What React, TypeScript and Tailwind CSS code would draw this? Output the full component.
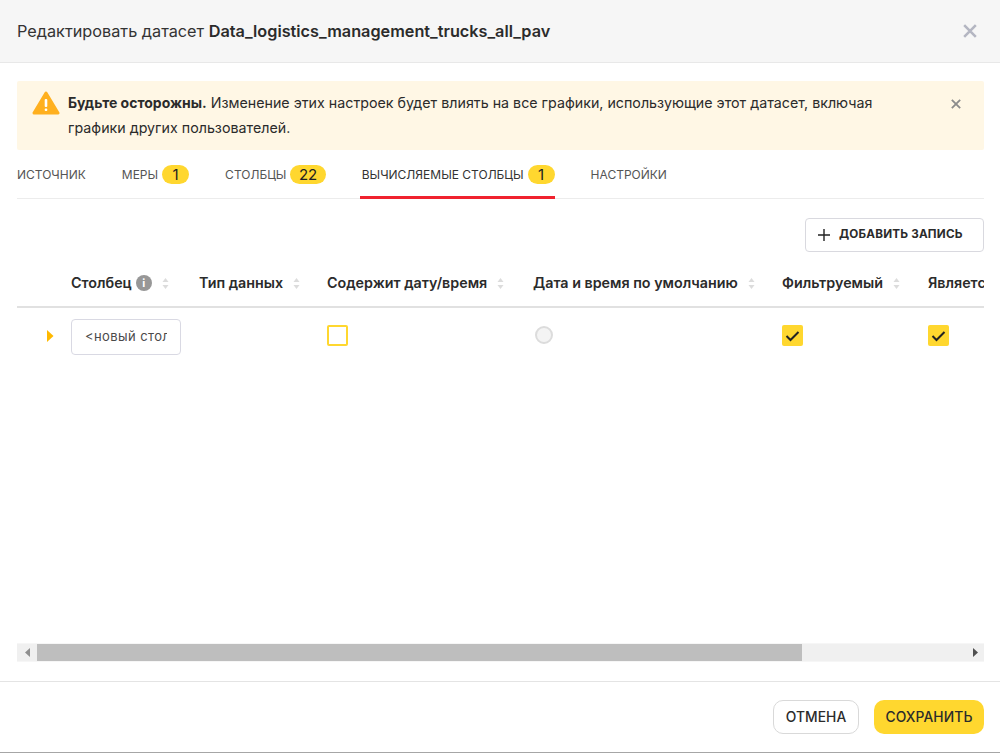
import React from "react";

const font = "font-['Inter','Noto_Sans',sans-serif]";

function Badge({ children }: { children: React.ReactNode }) {
  return (
    <span className="ml-[4px] inline-flex h-[19px] min-w-[27px] items-center justify-center rounded-full bg-[#ffd72f] px-[8.5px] text-[15px] leading-none text-[#222]">
      {children}
    </span>
  );
}

function Tab({ label, badge, active }: { label: string; badge?: string; active?: boolean }) {
  return (
    <div className={`relative flex h-full items-center pt-[1px] text-[12px] ${active ? "text-[#333]" : "text-[#555]"}`}>
      <span>{label}</span>
      {badge && <Badge>{badge}</Badge>}
      {active && <div className="absolute -bottom-px -left-[2px] right-0 h-[3px] bg-[#f0222e]" />}
    </div>
  );
}

function Sort() {
  return (
    <svg width="7" height="11" viewBox="0 0 7 11" className="shrink-0" fill="#dcdcdc">
      <path d="M3.5 0 L6.5 4 H0.5 Z" />
      <path d="M3.5 11 L6.5 7 H0.5 Z" />
    </svg>
  );
}

function Header({ children, info, noSort }: { children: React.ReactNode; info?: boolean; noSort?: boolean }) {
  return (
    <div className="flex items-center whitespace-nowrap text-[14.3px] font-semibold text-[#2b2b2b]">
      <span>{children}</span>
      {info && (
        <span className="ml-[4px] flex h-[16px] w-[16px] items-center justify-center rounded-full bg-[#979797] text-[11px] font-bold leading-none text-white">
          i
        </span>
      )}
      {!noSort && (
        <span className="ml-[10px]">
          <Sort />
        </span>
      )}
    </div>
  );
}

function Checked() {
  return (
    <div className="flex h-[21px] w-[21px] items-center justify-center rounded-[2px] bg-[#ffd72f]">
      <svg width="15" height="12" viewBox="0 0 15 12" fill="none" stroke="#222" strokeWidth="2">
        <path d="M1.5 6 L5.5 10 L13.5 2" />
      </svg>
    </div>
  );
}

function Close({ size, color }: { size: number; color: string }) {
  return (
    <svg width={size} height={size} viewBox="0 0 12 12" fill="none" stroke={color} strokeWidth="2.2">
      <path d="M1 1 L11 11 M11 1 L1 11" />
    </svg>
  );
}

export default function App() {
  return (
    <div className={`flex h-[753px] w-[1000px] flex-col overflow-hidden border-b border-[#a6a6a6] bg-white ${font}`}>
      <div className="flex h-[63px] shrink-0 items-center justify-between border-b border-[#e8e8e8] bg-[#f6f6f6] pl-[17px] pr-[23px]">
        <div className="text-[16.25px] text-[#333]">
          Редактировать датасет <span className="font-semibold text-[#2b2b2b]">Data_logistics_management_trucks_all_pav</span>
        </div>
        <Close size={14} color="#b4b6c2" />
      </div>

      <div className="flex flex-1 flex-col pl-[17px] pr-[16px]">
        <div className="mt-[18px] flex h-[69px] items-start justify-between rounded-[2px] bg-[#fff7e5] pl-[15px] pr-[23px] pt-[9px]">
          <div className="flex items-start">
            <svg width="28" height="25" viewBox="0 0 28 25" className="mr-[8px] mt-[1px] shrink-0">
              <path d="M14 2 L26 22 H2 Z" fill="#ffb01f" stroke="#ffb01f" strokeWidth="3" strokeLinejoin="round" />
              <rect x="12.7" y="8" width="2.6" height="8" rx="1" fill="#fff" />
              <rect x="12.7" y="17.5" width="2.6" height="2.6" rx="1" fill="#fff" />
            </svg>
            <div className="w-[830px] text-[14.25px] leading-[25px] text-[#2b2b2b]">
              <span className="text-[14px] font-bold">Будьте осторожны.</span> Изменение этих настроек будет влиять на все графики, использующие этот датасет, включая графики других пользователей.
            </div>
          </div>
          <div className="mt-[9px]">
            <Close size={10} color="#8c8c8c" />
          </div>
        </div>

        <div className="flex h-[49px] items-stretch gap-[36px] border-b border-[#ececec]">
          <Tab label="ИСТОЧНИК" />
          <Tab label="МЕРЫ" badge="1" />
          <Tab label="СТОЛБЦЫ" badge="22" />
          <Tab label="ВЫЧИСЛЯЕМЫЕ СТОЛБЦЫ" badge="1" active />
          <Tab label="НАСТРОЙКИ" />
        </div>

        <div className="mt-[19px] flex justify-end">
          <div className="flex h-[34px] w-[179px] items-center rounded-[4px] border border-[#d9d9df] bg-white pl-[12px] text-[11.7px] font-bold tracking-[0.2px] text-[#2b2b2b]">
            <svg width="12" height="12" viewBox="0 0 12 12" stroke="#222" strokeWidth="1.4" className="mr-[9px]">
              <path d="M6 0 V12 M0 6 H12" />
            </svg>
            ДОБАВИТЬ ЗАПИСЬ
          </div>
        </div>

        <div className="mt-[6px] w-[967px] overflow-hidden">
          <div className="grid h-[50px] w-[1100px] grid-cols-[54px_128px_128px_206px_249px_146px_189px] items-center border-b-2 border-[#e1e1e1] pt-[2px]">
            <div />
            <Header info>Столбец</Header>
            <Header>Тип данных</Header>
            <Header>Содержит дату/время</Header>
            <Header>Дата и время по умолчанию</Header>
            <Header>Фильтруемый</Header>
            <Header noSort>Является временным</Header>
          </div>
          <div className="grid w-[1100px] grid-cols-[54px_128px_128px_206px_249px_146px_189px] items-center pt-[11px]">
            <div className="pb-[3px] pl-[29px]">
              <svg width="8" height="12" viewBox="0 0 8 12" fill="#ffb900" className="block">
                <path d="M1 0 L7.5 6 L1 12 Z" />
              </svg>
            </div>
            <div>
              <div className="flex h-[36px] w-[110px] items-center overflow-hidden rounded-[4px] border border-[#d9d9e3] pl-[13px] pr-[13px] text-[13px] tracking-[0.4px] text-[#4a4a4a]">
                <span className="overflow-hidden whitespace-nowrap">&lt;новый столбец&gt;</span>
              </div>
            </div>
            <div />
            <div className="pb-[3px]">
              <div className="h-[21px] w-[21px] rounded-[2px] border-2 border-[#ffd72f]" />
            </div>
            <div className="pb-[4px] pl-[2px]">
              <div className="h-[18px] w-[18px] rounded-full border-2 border-[#dcdcdc] bg-[#f4f4f4]" />
            </div>
            <div className="pb-[3px]"><Checked /></div>
            <div className="pb-[3px]"><Checked /></div>
          </div>
        </div>

        <div className="flex-1" />

        <div className="flex h-[19px] w-[967px] items-stretch border-y border-[#f6f6f6] bg-[#f0f0f0]">
          <div className="flex w-[20px] items-center justify-center">
            <svg width="5" height="9" viewBox="0 0 5 9" fill="#8f8f8f"><path d="M5 0 V9 L0 4.5 Z" /></svg>
          </div>
          <div className="w-[765px] bg-[#bebebe]" />
          <div className="flex flex-1 items-center justify-end pr-[6px]">
            <svg width="5" height="9" viewBox="0 0 5 9" fill="#505050"><path d="M0 0 V9 L5 4.5 Z" /></svg>
          </div>
        </div>
        <div className="h-[19px]" />
      </div>

      <div className="flex h-[71px] shrink-0 items-center justify-end gap-[15px] border-t border-[#e4e4e4] pr-[16px]">
        <div className="flex h-[34px] w-[86px] items-center justify-center rounded-[10px] border border-[#d9d9d9] text-[13.8px] font-medium tracking-[0.1px] text-[#2b2b2b]">
          ОТМЕНА
        </div>
        <div className="flex h-[34px] w-[110px] items-center justify-center rounded-[10px] bg-[#ffd72f] text-[13.8px] font-medium tracking-[0.1px] text-[#2b2b2b]">
          СОХРАНИТЬ
        </div>
      </div>
    </div>
  );
}
